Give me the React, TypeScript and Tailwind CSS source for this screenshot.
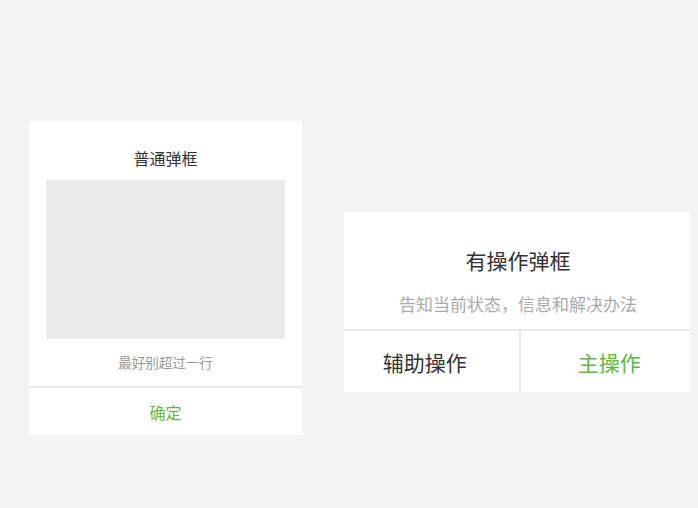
import React from 'react';

const font = "font-['Noto_Sans_CJK_SC','Noto_Sans',sans-serif]";

const PlainDialog: React.FC = () => (
  <div className="w-[273px] bg-white flex flex-col">
    <div className="flex flex-col items-center pt-[25px] px-[17px] pb-[14px]">
      <h3 className="text-[16px] leading-[24px] text-[#333333]">普通弹框</h3>
      <div className="mt-[10px] w-full h-[159px] bg-[#ebebeb]" />
      <p className="mt-[13px] text-[13.5px] leading-[20px] text-[#999999]">最好别超过一行</p>
    </div>
    <div className="h-[2px] bg-[#e8e8e8]" />
    <button className="h-[47px] text-[16px] text-[#5fb749] flex items-center justify-center">确定</button>
  </div>
);

const ActionDialog: React.FC = () => (
  <div className="w-[346px] bg-white flex flex-col">
    <div className="flex flex-col items-center pt-[33px] pb-[13px] pl-[2px]">
      <h3 className="text-[21px] leading-[30px] text-[#333333]">有操作弹框</h3>
      <p className="mt-[17px] text-[17px] leading-[24px] text-[#aaaaaa]">告知当前状态，信息和解决办法</p>
    </div>
    <div className="h-[2px] bg-[#e8e8e8]" />
    <div className="flex h-[61px]">
      <button className="flex-1 flex items-center justify-center pr-[13px] pt-[2px] text-[21px] text-[#333333]">辅助操作</button>
      <div className="w-[2px] bg-[#e8e8e8]" />
      <button className="flex-1 flex items-center justify-center pl-[8px] pt-[2px] text-[21px] text-[#5fb749]">主操作</button>
    </div>
  </div>
);

export default function App() {
  return (
    <div className={`${font} w-[698px] h-[508px] bg-[#f3f3f3] flex items-start pl-[29px] pt-[121px] gap-[42px]`}>
      <PlainDialog />
      <div className="mt-[91px]">
        <ActionDialog />
      </div>
    </div>
  );
}
